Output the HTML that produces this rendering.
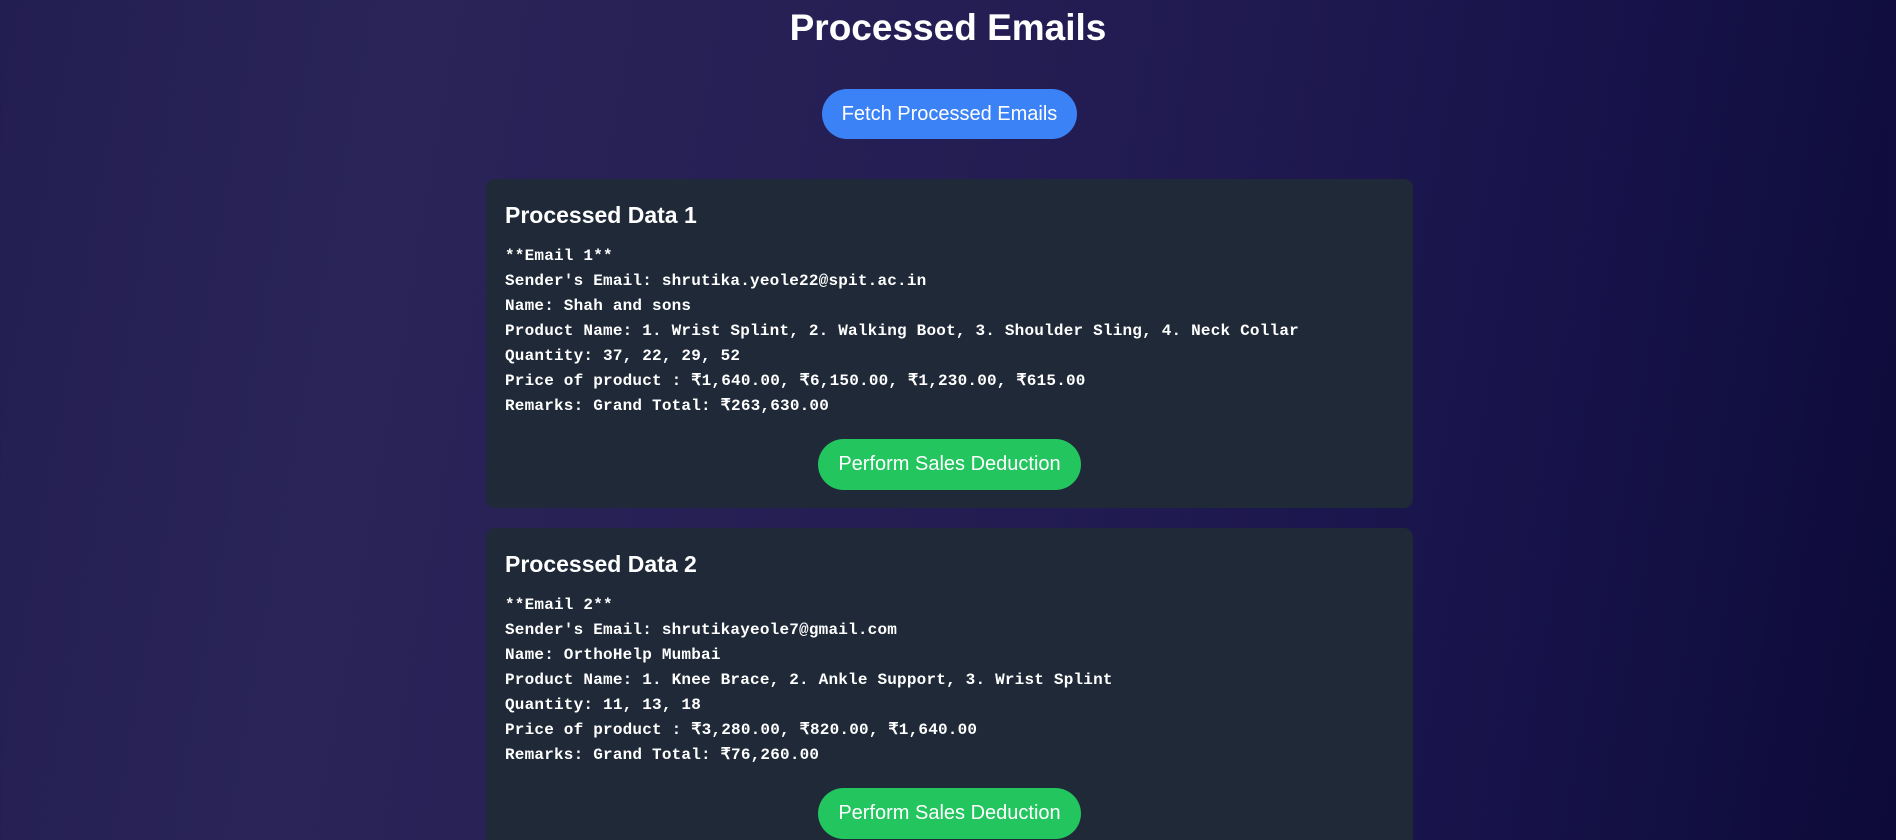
<!DOCTYPE html>
<html><head><meta charset="utf-8"><style>
html,body{margin:0;padding:0;width:1896px;height:840px;overflow:hidden}
body{background:linear-gradient(100deg,#231e52 0%,#2a2459 20%,#221c52 55%,#17134a 80%,#0d0a38 100%);font-family:"Liberation Sans",Arial,sans-serif;color:#fff;position:relative}
h1{position:absolute;top:2px;left:0;width:100%;margin:0;text-align:center;font-size:37px;line-height:52px;font-weight:bold}
.btn{position:absolute;border-radius:26px;color:#fff;font-size:20px;text-align:center;line-height:50px;height:50px}
.fetch{left:822px;top:89px;width:255px;background:#3b82f6}
.card{position:absolute;left:486px;width:927px;background:#1f2937;border-radius:9px}
.card h3{position:absolute;left:19px;top:22px;margin:0;font-size:23px;line-height:28px;font-weight:bold}
.card pre{position:absolute;left:19px;top:65px;margin:0;font-family:"Liberation Mono",monospace;font-weight:bold;font-size:16px;letter-spacing:0.2px;line-height:25px;color:#fff}
.green{left:332px;top:260px;width:263px;height:51px;background:#22c55e}
</style></head><body>
<h1>Processed Emails</h1>
<div class="btn fetch">Fetch Processed Emails</div>
<div class="card" style="top:179px;height:329px">
<h3>Processed Data 1</h3>
<pre>**Email 1**
Sender's Email: shrutika.yeole22@spit.ac.in
Name: Shah and sons
Product Name: 1. Wrist Splint, 2. Walking Boot, 3. Shoulder Sling, 4. Neck Collar
Quantity: 37, 22, 29, 52
Price of product : ₹1,640.00, ₹6,150.00, ₹1,230.00, ₹615.00
Remarks: Grand Total: ₹263,630.00</pre>
<div class="btn green">Perform Sales Deduction</div>
</div>
<div class="card" style="top:528px;height:340px">
<h3>Processed Data 2</h3>
<pre>**Email 2**
Sender's Email: shrutikayeole7@gmail.com
Name: OrthoHelp Mumbai
Product Name: 1. Knee Brace, 2. Ankle Support, 3. Wrist Splint
Quantity: 11, 13, 18
Price of product : ₹3,280.00, ₹820.00, ₹1,640.00
Remarks: Grand Total: ₹76,260.00</pre>
<div class="btn green">Perform Sales Deduction</div>
</div>
</body></html>
